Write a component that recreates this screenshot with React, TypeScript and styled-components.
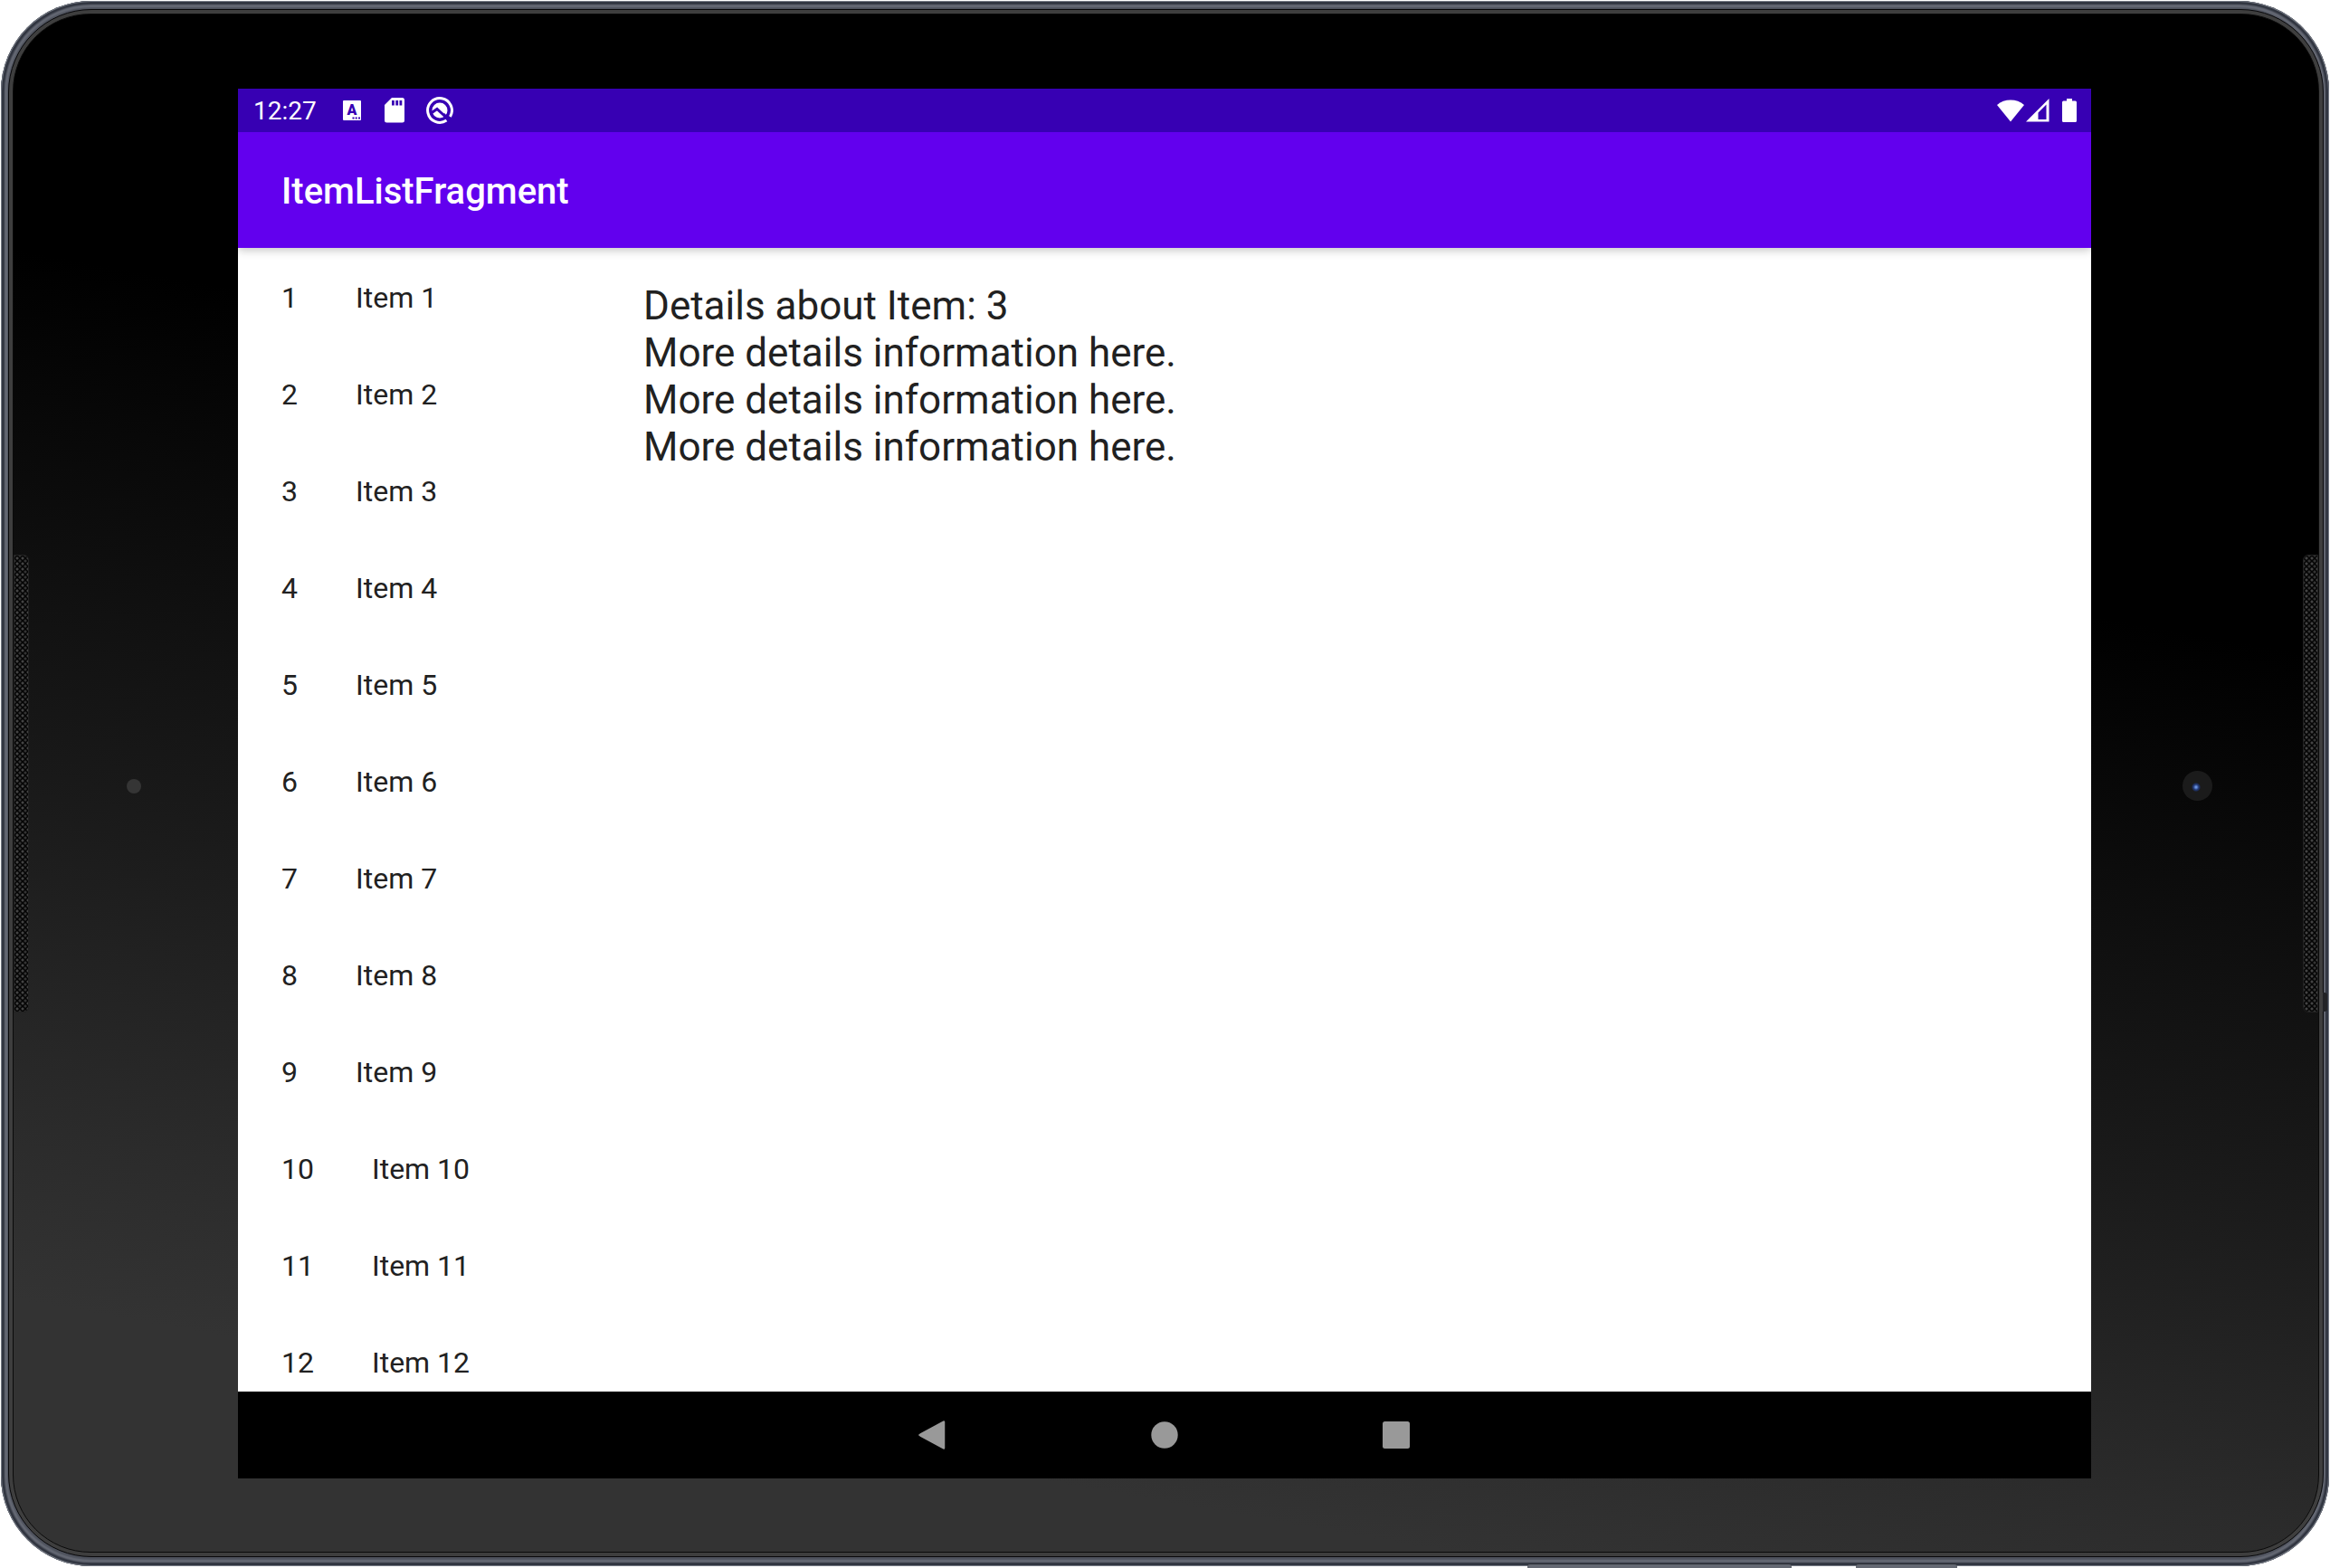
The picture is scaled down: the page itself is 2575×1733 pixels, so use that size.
import React from "react";
import styled, { createGlobalStyle } from "styled-components";

const GlobalStyle = createGlobalStyle`
  *, *::before, *::after { box-sizing: border-box; }
  body { margin: 0; background: #fff; font-family: Roboto, "Noto Sans", sans-serif; }
  h1, p, ul { margin: 0; padding: 0; }
  ul { list-style: none; }
  button { border: 0; background: none; font: inherit; color: inherit; cursor: pointer; }
  svg { display: block; }
`;

/* Tablet body */

const Stage = styled.div`
  position: relative;
  display: flex;
  height: 100vh;
  padding: 1px 1px 2px;
  overflow: hidden;
`;

const MetalRim = styled.div`
  flex: 1;
  display: flex;
  padding: 9px 6px 10px 8px;
  border-radius: 100px;
  background: #4d515c;
  box-shadow:
    inset 0 0 1px 1px #7d828c,
    inset 0 0 2px 4px #2c303b,
    inset 0 0 2px 7px #6a6e79;
`;

const Bezel = styled.div`
  flex: 1;
  display: flex;
  padding: 4px;
  border: 1px solid #08080a;
  border-radius: 92px;
  background: #3e3e3e;
`;

const Glass = styled.div`
  flex: 1;
  display: grid;
  grid-template-columns: 248px minmax(0, 1fr) 251px;
  min-height: 0;
  border: 1px solid #0a0a0a;
  border-radius: 86px;
  background: linear-gradient(190deg, #000 0%, #000 33%, #111 51%, #1b1b1b 62%, #2b2b2b 78%, #333 87%, #333 100%);
`;

const SideStrip = styled.div<{ $mirrored?: boolean }>`
  display: flex;
  flex-direction: ${(p) => (p.$mirrored ? "row-reverse" : "row")};
  align-items: center;
`;

const Speaker = styled.div<{ $mirrored?: boolean }>`
  width: 17px;
  height: 506px;
  border: 1px solid #222;
  border-radius: ${(p) => (p.$mirrored ? "6px 0 0 6px" : "0 6px 6px 0")};
  background-color: #040404;
  background-image:
    radial-gradient(circle, #444 1px, transparent 2px),
    radial-gradient(circle, #333 1px, transparent 2px);
  background-size: 6px 6px;
  background-position: 0 0, 3px 3px;
`;

const SensorSlot = styled.div`
  flex: 1;
  display: flex;
  justify-content: center;
  padding-top: 6px;
`;

const LightSensor = styled.div`
  width: 16px;
  height: 16px;
  border-radius: 50%;
  background: #353535;
`;

const Camera = styled.div`
  width: 33px;
  height: 33px;
  border-radius: 50%;
  background: radial-gradient(circle at 15px 18px, #7ea4e8 0, #6088d8 1px, #23386f 3px, #1c2c5a 4px, #1b1b1b 5px);
`;

const EdgeKey = styled.div<{ $right: number; $width: number }>`
  position: absolute;
  right: ${(p) => p.$right}px;
  bottom: 0;
  width: ${(p) => p.$width}px;
  height: 5px;
  border-top: 1px solid #2a2d34;
  border-radius: 3px 3px 0 0;
  background: #646872;
`;

const SideNotch = styled.div`
  position: absolute;
  right: 3px;
  top: 1097px;
  width: 5px;
  height: 21px;
  border-radius: 0 3px 3px 0;
  background: #222326;
`;

/* Screen */

const Screen = styled.main`
  display: flex;
  flex-direction: column;
  min-height: 0;
  margin: 82px 0 81px;
  background: #fff;
`;

const StatusBar = styled.header`
  display: flex;
  align-items: center;
  justify-content: space-between;
  flex: none;
  height: 48px;
  padding: 0 16px 0 17px;
  background: #3700b3;
  color: #fff;
`;

const StatusGroup = styled.div<{ $gap: number }>`
  display: flex;
  align-items: center;
  gap: ${(p) => p.$gap}px;
`;

const Clock = styled.time`
  margin-right: 5px;
  padding-top: 2px;
  font-size: 28px;
  line-height: 46px;
`;

const Toolbar = styled.div`
  position: relative;
  flex: none;
  display: flex;
  align-items: center;
  height: 128px;
  padding: 4px 48px 0;
  background: #6200ee;
  box-shadow: 0 2px 10px rgba(0, 0, 0, 0.25);
  clip-path: inset(0 0 -16px 0);
`;

const Title = styled.h1`
  color: #fff;
  font-size: 40px;
  line-height: 48px;
  font-weight: 500;
`;

const Panes = styled.div`
  flex: 1;
  display: flex;
  min-height: 0;
  overflow: hidden;
  color: #212121;
`;

const ItemList = styled.ul`
  flex: none;
  width: 400px;
  && {
    padding-top: 2px;
  }
`;

const ItemRow = styled.button`
  display: flex;
  gap: 64px;
  width: 100%;
  padding: 32px 48px;
  font-size: 32px;
  line-height: 43px;
  text-align: left;
`;

const Detail = styled.p`
  flex: 1;
  font-size: 44px;
  line-height: 52px;
  white-space: pre-line;
  && {
    padding: 38px 48px;
  }
`;

const NavBar = styled.nav`
  flex: none;
  display: flex;
  justify-content: center;
  height: 96px;
  background: #000;
`;

const NavButton = styled.button`
  display: flex;
  align-items: center;
  justify-content: center;
  width: 256px;
  padding: 0;
`;

const items = Array.from({ length: 12 }, (_, i) => i + 1);

const detailText = [
  "Details about Item: 3",
  "More details information here.",
  "More details information here.",
  "More details information here.",
].join("\n");

const KeyboardIcon = () => (
  <svg width="20" height="22" viewBox="0 0 20 22" aria-hidden="true">
    <rect width="20" height="22" rx="1" fill="#fff" />
    <text x="10" y="16" textAnchor="middle" fontSize="16" fontWeight="900" fill="#3700b3">A</text>
    <path d="M10.5 18.5h2v2h-2zM13.700 18.500h2v2h-2zM17 18.500h2v2h-2z" fill="#3700b3" />
  </svg>
);

const SdCardIcon = () => (
  <svg width="24" height="28" viewBox="-2 0 24 28" aria-hidden="true">
    <path
      fillRule="evenodd"
      fill="#fff"
      d="M8 0h11.500a2.500 2.500 0 0 1 2.500 2.500v22.500a2.500 2.500 0 0 1-2.500 2.500h-17a2.500 2.500 0 0 1-2.500-2.500v-17zM8 3v5.500h2.800v-5.500zM12.300 3v5.500h2.800v-5.500zM16.500 3v5.500h2.800v-5.500z"
    />
  </svg>
);

const SearchRingIcon = () => (
  <svg width="30" height="30" viewBox="0 0 30 30" fill="none" aria-hidden="true">
    <circle cx="15" cy="15" r="8.500" fill="#fff" />
    <path d="M5.500 18l6.500-4.500 12 11" stroke="#3700b3" strokeWidth="3" />
    <path d="M22.500 26.100A13.400 13.400 0 1 1 26.500 21.900" stroke="#fff" strokeWidth="3" />
    <path d="M19 19l7 7" stroke="#3700b3" strokeWidth="3" />
  </svg>
);

const WifiIcon = () => (
  <svg width="30" height="26" viewBox="0 0 30 26" aria-hidden="true">
    <path d="M15 25.500L0 7A23.500 23.500 0 0 1 30 7z" fill="#fff" />
  </svg>
);

const SignalIcon = () => (
  <svg width="26" height="26" viewBox="0 0 26 26" aria-hidden="true">
    <path fillRule="evenodd" fill="#fff" d="M0 25.500L25.500 0v25.500zM13.500 15.500v7.500h9v-16.500z" />
  </svg>
);

const BatteryIcon = () => (
  <svg width="16" height="26" viewBox="0 0 16 26" aria-hidden="true">
    <path fill="#fff" d="M5 0h6v2.500h3.500a1.500 1.500 0 0 1 1.500 1.500v20.500a1.500 1.500 0 0 1-1.500 1.500h-13a1.500 1.500 0 0 1-1.500-1.500v-20.500a1.500 1.500 0 0 1 1.500-1.500h3.500z" />
  </svg>
);

export default function App() {
  return (
    <>
      <GlobalStyle />
      <Stage>
        <MetalRim>
          <Bezel>
            <Glass>
              <SideStrip>
                <Speaker />
                <SensorSlot>
                  <LightSensor />
                </SensorSlot>
              </SideStrip>

              <Screen>
                <StatusBar>
                  <StatusGroup $gap={24}>
                    <Clock>12:27</Clock>
                    <KeyboardIcon />
                    <SdCardIcon />
                    <SearchRingIcon />
                  </StatusGroup>
                  <StatusGroup $gap={2}>
                    <WifiIcon />
                    <StatusGroup $gap={14}>
                      <SignalIcon />
                      <BatteryIcon />
                    </StatusGroup>
                  </StatusGroup>
                </StatusBar>

                <Toolbar>
                  <Title>ItemListFragment</Title>
                </Toolbar>

                <Panes>
                  <ItemList>
                    {items.map((n) => (
                      <li key={n}>
                        <ItemRow type="button">
                          <span>{n}</span>
                          <span>Item {n}</span>
                        </ItemRow>
                      </li>
                    ))}
                  </ItemList>
                  <Detail>{detailText}</Detail>
                </Panes>

                <NavBar aria-label="System navigation">
                  <NavButton type="button" aria-label="Back">
                    <svg width="32" height="32" viewBox="0 0 32 32">
                      <path d="M28 1.500v29L1.500 16z" fill="#999" stroke="#999" strokeWidth="2.500" strokeLinejoin="round" />
                    </svg>
                  </NavButton>
                  <NavButton type="button" aria-label="Home">
                    <svg width="30" height="30" viewBox="0 0 30 30">
                      <circle cx="15" cy="15" r="14.700" fill="#999" />
                    </svg>
                  </NavButton>
                  <NavButton type="button" aria-label="Recent apps">
                    <svg width="30" height="30" viewBox="0 0 30 30">
                      <rect width="30" height="30" rx="2.500" fill="#999" />
                    </svg>
                  </NavButton>
                </NavBar>
              </Screen>

              <SideStrip $mirrored>
                <Speaker $mirrored />
                <SensorSlot>
                  <Camera />
                </SensorSlot>
              </SideStrip>
            </Glass>
          </Bezel>
        </MetalRim>
        <EdgeKey $right={595} $width={292} />
        <EdgeKey $right={412} $width={112} />
        <SideNotch />
      </Stage>
    </>
  );
}
